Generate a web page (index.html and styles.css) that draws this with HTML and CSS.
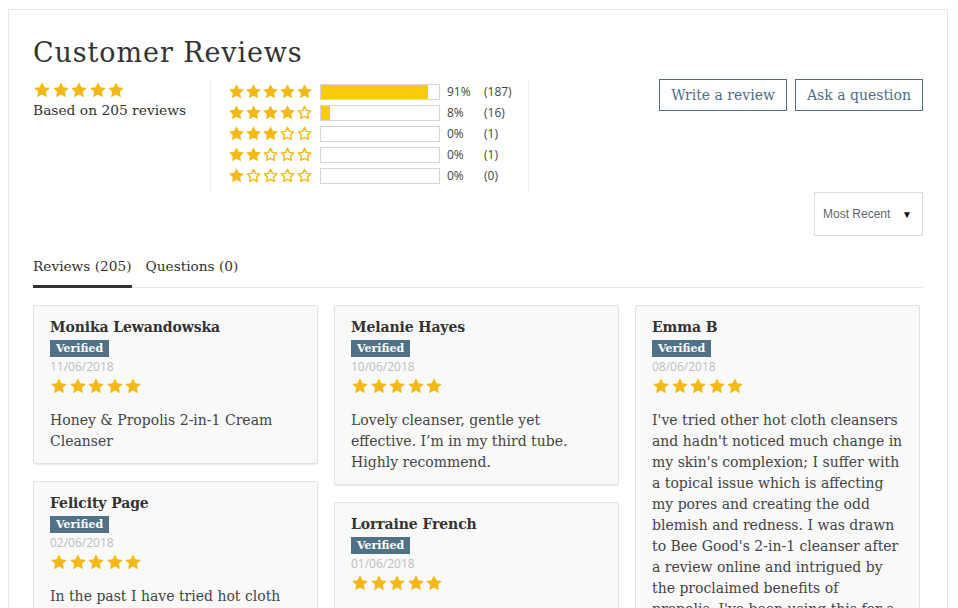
FILE: index.html
```
<!DOCTYPE html>
<html lang="en">
<head>
<meta charset="utf-8">
<title>Customer Reviews</title>
<link rel="stylesheet" href="styles.css">
</head>
<body>
<svg width="0" height="0" class="defs" aria-hidden="true">
  <defs>
    <symbol id="star" viewBox="0 0 24 24"><path d="M12 1.6l3.2 6.6 7.2 1-5.2 5.1 1.3 7.2L12 18.1l-6.5 3.4 1.3-7.2L1.6 9.2l7.2-1z"/></symbol>
    <symbol id="star-o" viewBox="0 0 24 24"><path d="M12 3.4l2.7 5.6 6.1.9-4.4 4.3 1 6.1L12 17.4l-5.4 2.9 1-6.1-4.4-4.3 6.1-.9z" fill="none" stroke="currentColor" stroke-width="2" stroke-linejoin="round"/></symbol>
  </defs>
</svg>
<div class="reviews">
  <h2 class="title">Customer Reviews</h2>
  <div class="summary-row">
    <div class="summary">
      <div class="stars stars-lg">
        <svg><use href="#star"/></svg><svg><use href="#star"/></svg><svg><use href="#star"/></svg><svg><use href="#star"/></svg><svg><use href="#star"/></svg>
      </div>
      <div class="based">Based on 205 reviews</div>
    </div>
    <div class="histogram">
      <div class="hrow">
        <div class="stars stars-sm"><svg><use href="#star"/></svg><svg><use href="#star"/></svg><svg><use href="#star"/></svg><svg><use href="#star"/></svg><svg><use href="#star"/></svg></div>
        <div class="bar"><div class="fill" style="width:91%"></div></div>
        <span class="pct">91%</span><span class="count">(187)</span>
      </div>
      <div class="hrow">
        <div class="stars stars-sm"><svg><use href="#star"/></svg><svg><use href="#star"/></svg><svg><use href="#star"/></svg><svg><use href="#star"/></svg><svg><use href="#star-o"/></svg></div>
        <div class="bar"><div class="fill" style="width:8%"></div></div>
        <span class="pct">8%</span><span class="count">(16)</span>
      </div>
      <div class="hrow">
        <div class="stars stars-sm"><svg><use href="#star"/></svg><svg><use href="#star"/></svg><svg><use href="#star"/></svg><svg><use href="#star-o"/></svg><svg><use href="#star-o"/></svg></div>
        <div class="bar"><div class="fill" style="width:0%"></div></div>
        <span class="pct">0%</span><span class="count">(1)</span>
      </div>
      <div class="hrow">
        <div class="stars stars-sm"><svg><use href="#star"/></svg><svg><use href="#star"/></svg><svg><use href="#star-o"/></svg><svg><use href="#star-o"/></svg><svg><use href="#star-o"/></svg></div>
        <div class="bar"><div class="fill" style="width:0%"></div></div>
        <span class="pct">0%</span><span class="count">(1)</span>
      </div>
      <div class="hrow">
        <div class="stars stars-sm"><svg><use href="#star"/></svg><svg><use href="#star-o"/></svg><svg><use href="#star-o"/></svg><svg><use href="#star-o"/></svg><svg><use href="#star-o"/></svg></div>
        <div class="bar"><div class="fill" style="width:0%"></div></div>
        <span class="pct">0%</span><span class="count">(0)</span>
      </div>
    </div>
    <div class="actions">
      <a class="btn" href="#">Write a review</a>
      <a class="btn" href="#">Ask a question</a>
    </div>
  </div>
  <div class="sort-row">
    <div class="select"><span>Most Recent</span><span class="caret">&#9660;</span></div>
  </div>
  <div class="tabs">
    <span class="tab active">Reviews (205)</span>
    <span class="tab">Questions (0)</span>
  </div>
  <div class="grid">
    <div class="col">
      <div class="card">
        <div class="name">Monika Lewandowska</div>
        <span class="badge">Verified</span>
        <div class="date">11/06/2018</div>
        <div class="stars stars-lg"><svg><use href="#star"/></svg><svg><use href="#star"/></svg><svg><use href="#star"/></svg><svg><use href="#star"/></svg><svg><use href="#star"/></svg></div>
        <p class="body">Honey &amp; Propolis 2-in-1 Cream Cleanser</p>
      </div>
      <div class="card">
        <div class="name">Felicity Page</div>
        <span class="badge">Verified</span>
        <div class="date">02/06/2018</div>
        <div class="stars stars-lg"><svg><use href="#star"/></svg><svg><use href="#star"/></svg><svg><use href="#star"/></svg><svg><use href="#star"/></svg><svg><use href="#star"/></svg></div>
        <p class="body">In the past I have tried hot cloth cleansers from other brands but this one is by far the best I have used. It leaves my skin soft and clean.</p>
      </div>
    </div>
    <div class="col">
      <div class="card">
        <div class="name">Melanie Hayes</div>
        <span class="badge">Verified</span>
        <div class="date">10/06/2018</div>
        <div class="stars stars-lg"><svg><use href="#star"/></svg><svg><use href="#star"/></svg><svg><use href="#star"/></svg><svg><use href="#star"/></svg><svg><use href="#star"/></svg></div>
        <p class="body">Lovely cleanser, gentle yet effective. I’m in my third tube. Highly recommend.</p>
      </div>
      <div class="card">
        <div class="name">Lorraine French</div>
        <span class="badge">Verified</span>
        <div class="date">01/06/2018</div>
        <div class="stars stars-lg"><svg><use href="#star"/></svg><svg><use href="#star"/></svg><svg><use href="#star"/></svg><svg><use href="#star"/></svg><svg><use href="#star"/></svg></div>
        <p class="body">Wonderful product, my skin feels so soft after every use.</p>
      </div>
    </div>
    <div class="col">
      <div class="card">
        <div class="name">Emma B</div>
        <span class="badge">Verified</span>
        <div class="date">08/06/2018</div>
        <div class="stars stars-lg"><svg><use href="#star"/></svg><svg><use href="#star"/></svg><svg><use href="#star"/></svg><svg><use href="#star"/></svg><svg><use href="#star"/></svg></div>
        <p class="body">I've tried other hot cloth cleansers and hadn't noticed much change in my skin's complexion; I suffer with a topical issue which is affecting my pores and creating the odd blemish and redness. I was drawn to Bee Good's 2-in-1 cleanser after a review online and intrigued by the proclaimed benefits of propolis. I've been using this for a few weeks now and my skin is clearer.</p>
      </div>
    </div>
  </div>
</div>
</body>
</html>
```
FILE: styles.css
```
* { box-sizing: border-box; }
html, body { margin: 0; padding: 0; background: #fff; }
body {
  padding: 9px 10px 0 8px;
  font-family: "DejaVu Serif", "Liberation Serif", serif;
  color: #333;
  overflow: hidden;
  height: 608px;
}
.defs { position: absolute; }
.reviews {
  border: 1px solid #e6e6e6;
  border-bottom: none;
  padding: 24px 24px 0 24px;
  min-height: 700px;
}
.title {
  margin: 0;
  font-weight: normal;
  font-size: 27px;
  line-height: 38px;
  letter-spacing: 0.9px;
  color: #333;
}
.summary-row {
  display: flex;
  align-items: flex-start;
  margin-top: 7px;
}
.summary { width: 177px; padding-top: 2px; }
.stars { display: flex; color: #f5b915; fill: #f5b915; }
.stars svg { display: block; }
.stars-lg svg { width: 18px; height: 18px; margin-right: 0.5px; }
.stars-sm svg { width: 17px; height: 17px; }
.based { font-size: 13.8px; line-height: 20px; color: #333; margin-top: 1px; }
.histogram {
  width: 319px;
  border-left: 1px solid #ececec;
  border-right: 1px solid #ececec;
  padding: 2px 0 6px 17px;
}
.hrow {
  display: flex;
  align-items: center;
  height: 21px;
  font-family: "Open Sans", "Liberation Sans", sans-serif;
  font-size: 12px;
  color: #444;
}
.bar {
  width: 120px;
  height: 16px;
  border: 1px solid #d6d6d6;
  margin-left: 7px;
  background: #fff;
}
.fill { height: 100%; background: #facb0c; }
.pct { margin-left: 7px; width: 37px; }
.actions {
  margin-left: auto;
  display: flex;
  gap: 8px;
}
.btn {
  display: block;
  height: 32px;
  line-height: 30px;
  padding: 0 11px;
  border: 1px solid #4e6f83;
  color: #4e6f83;
  text-decoration: none;
  font-size: 14px;
}
.sort-row { display: flex; justify-content: flex-end; margin-top: 0; }
.select {
  width: 109px;
  height: 44px;
  border: 1px solid #dcdcdc;
  display: flex;
  align-items: center;
  justify-content: space-between;
  padding: 0 10px 0 8px;
  font-family: "Liberation Sans", sans-serif;
  font-size: 12px;
  color: #5f6670;
}
.caret { font-size: 10px; color: #111; }
.tabs {
  display: flex;
  gap: 14px;
  margin-top: 20px;
  border-bottom: 1px solid #e6e6e6;
}
.tab {
  font-size: 13.7px;
  line-height: 20px;
  padding-bottom: 11px;
  color: #333;
}
.tab.active { border-bottom: 3px solid #333; margin-bottom: -1px; padding-bottom: 9px; }
.grid {
  display: flex;
  gap: 16px;
  margin-top: 17px;
}
.col { width: 285px; display: flex; flex-direction: column; gap: 17px; }
.card {
  background: #f9f9f9;
  border: 1px solid #e2e2e2;
  box-shadow: 0 1px 1px rgba(0,0,0,0.08);
  border-radius: 2px;
  padding: 11px 16px 11px 16px;
}
.name { font-weight: bold; font-size: 14px; letter-spacing: -0.1px; line-height: 20px; color: #333; }
.badge {
  display: inline-block;
  margin-top: 3px;
  background: #4f7288;
  color: #fff;
  font-weight: bold;
  font-size: 11px;
  line-height: 17px;
  padding: 0 6px;
}
.date {
  margin-top: 2px;
  font-family: "Open Sans", "Liberation Sans", sans-serif;
  font-size: 12px;
  line-height: 16px;
  color: #bdbdbd;
}
.card .stars { margin-top: 2px; }
.body {
  margin: 15px 0 0 0;
  font-size: 14px;
  line-height: 21px;
  color: #444;
}
```
